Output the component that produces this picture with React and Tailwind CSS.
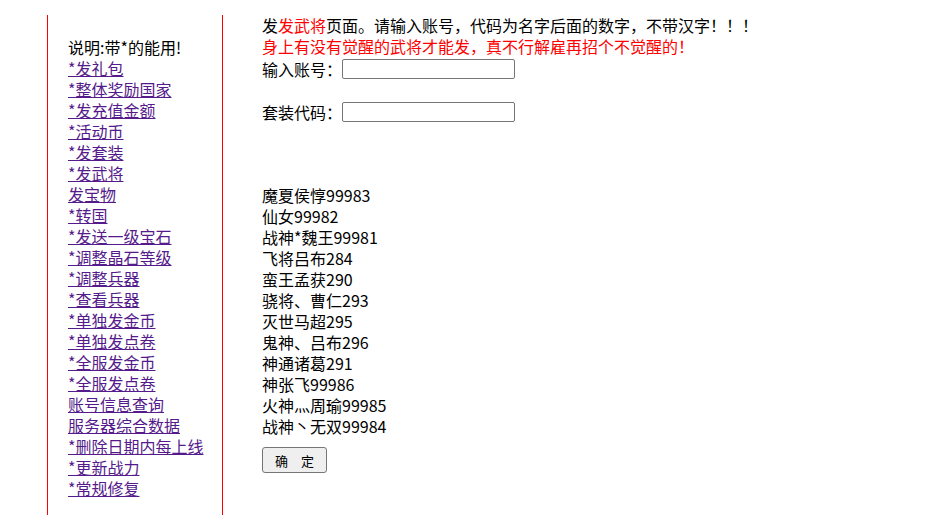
const links = [
  "*发礼包",
  "*整体奖励国家",
  "*发充值金额",
  "*活动币",
  "*发套装",
  "*发武将",
  "发宝物",
  "*转国",
  "*发送一级宝石",
  "*调整晶石等级",
  "*调整兵器",
  "*查看兵器",
  "*单独发金币",
  "*单独发点卷",
  "*全服发金币",
  "*全服发点卷",
  "账号信息查询",
  "服务器综合数据",
  "*删除日期内每上线",
  "*更新战力",
  "*常规修复",
];

const heroes = [
  "魔夏侯惇99983",
  "仙女99982",
  "战神*魏王99981",
  "飞将吕布284",
  "蛮王孟获290",
  "骁将、曹仁293",
  "灭世马超295",
  "鬼神、吕布296",
  "神通诸葛291",
  "神张飞99986",
  "火神灬周瑜99985",
  "战神丶无双99984",
];

export default function App() {
  return (
    <div
      className="flex h-[515px] w-[951px] overflow-hidden bg-white pt-[15px] text-[16px] leading-[21px] text-black"
      style={{ fontFamily: '"Noto Sans CJK SC", "Noto Sans", sans-serif' }}
    >
      {/* left menu */}
      <div className="ml-[47px] w-[176px] shrink-0 border-x border-[#ff0000] pl-[20px] pt-[22px]">
        <div>说明:带*的能用!</div>
        {links.map((t) => (
          <div key={t}>
            <a href="#" className="text-[#551a8b] underline">
              {t}
            </a>
          </div>
        ))}
      </div>

      {/* main form */}
      <div className="pl-[39px]">
        <div>
          发<span className="text-[#ff0000]">发武将</span>
          页面。请输入账号，代码为名字后面的数字，不带汉字！！！
        </div>
        <div className="text-[#ff0000]">
          身上有没有觉醒的武将才能发，真不行解雇再招个不觉醒的！
        </div>
        <div className="mt-[2px] flex h-[20px] items-center">
          <span>输入账号：</span>
          <input
            type="text"
            className="h-[20px] w-[173px] rounded-[2px] border border-[#767676] bg-white"
          />
        </div>
        <div className="mt-[23px] flex h-[20px] items-center">
          <span>套装代码：</span>
          <input
            type="text"
            className="h-[20px] w-[173px] rounded-[2px] border border-[#767676] bg-white"
          />
        </div>

        <div className="mt-[63px]">
          {heroes.map((h) => (
            <div key={h}>{h}</div>
          ))}
        </div>

        <button className="mt-[10px] h-[26px] w-[65px] rounded-[3px] border border-[#767676] bg-[#efefef] text-[13px] leading-none">
          确　定
        </button>
      </div>
    </div>
  );
}
